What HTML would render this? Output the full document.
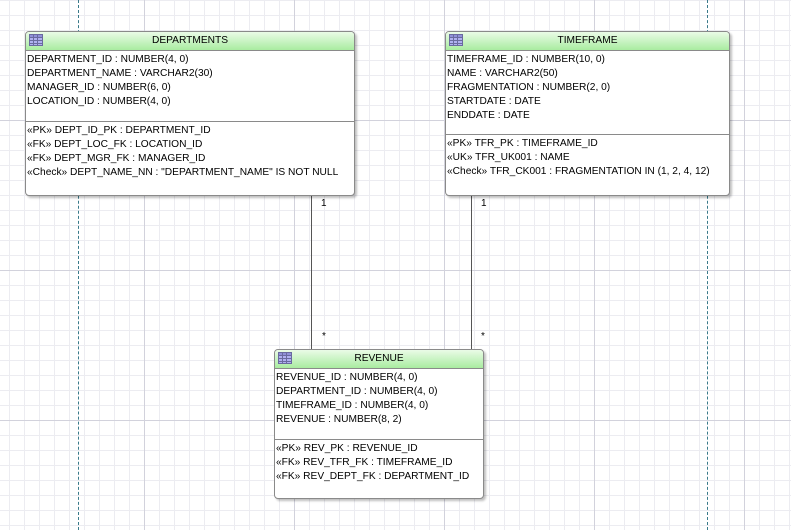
<!DOCTYPE html>
<html><head><style>
body{margin:0;width:791px;height:530px;overflow:hidden;position:relative;background:#fff;
background-image:
linear-gradient(to right,#d2d2dc 1px,transparent 1px),
linear-gradient(to bottom,#d2d2dc 1px,transparent 1px),
linear-gradient(to right,#ececf1 1px,transparent 1px),
linear-gradient(to bottom,#ececf1 1px,transparent 1px);
background-size:150px 150px,150px 150px,15px 15px,15px 15px;
background-position:144px 0,0 120px,9px 0,0 0;
font-family:"Liberation Sans",sans-serif;font-size:10.2px;color:#000}
.dash{position:absolute;top:0;width:0;height:530px;border-left:1px dashed #3a7a8a}
.t{position:absolute;background:#fff;border:1px solid #8a8a8a;border-radius:4px;box-shadow:2px 2px 2px rgba(0,0,0,.25);overflow:hidden}
.h{height:18px;border-bottom:1px solid #8a8a8a;background:linear-gradient(#eafbe7,#a9eca0);text-align:center;line-height:17px;position:relative}
.ic{position:absolute;left:3px;top:2px;width:14px;height:12px;border:1px solid #6a6aa0;box-sizing:border-box;
background:linear-gradient(to right,transparent 3px,#6a6aa0 3px,#6a6aa0 4px,transparent 4px,transparent 7px,#6a6aa0 7px,#6a6aa0 8px,transparent 8px),
linear-gradient(to bottom,#9090d8 2px,#6a6aa0 2px,#6a6aa0 3px,#b0b0f0 3px,#b0b0f0 5px,#6a6aa0 5px,#6a6aa0 6px,#b0b0f0 6px,#b0b0f0 8px,#6a6aa0 8px,#6a6aa0 9px,#b0b0f0 9px)}
.s{padding:2px 0 0 1px;line-height:14px;white-space:nowrap}
.sep{border-top:1px solid #8a8a8a}
.l{position:absolute;width:1px;background:#555}
.lb{position:absolute;font-size:10px}
</style></head><body>
<div class="dash" style="left:78px"></div>
<div class="dash" style="left:707px"></div>
<div class="l" style="left:311px;top:195px;height:154px"></div>
<div class="l" style="left:471px;top:195px;height:154px"></div>
<div class="lb" style="left:321px;top:198px">1</div>
<div class="lb" style="left:322px;top:331px">*</div>
<div class="lb" style="left:481px;top:198px">1</div>
<div class="lb" style="left:481px;top:331px">*</div>

<div class="t" style="left:25px;top:31px;width:328px;height:163px">
<div class="h"><span class="ic"></span>DEPARTMENTS</div>
<div class="s" style="height:68px">DEPARTMENT_ID : NUMBER(4, 0)<br>DEPARTMENT_NAME : VARCHAR2(30)<br>MANAGER_ID : NUMBER(6, 0)<br>LOCATION_ID : NUMBER(4, 0)</div>
<div class="sep s">«PK» DEPT_ID_PK : DEPARTMENT_ID<br>«FK» DEPT_LOC_FK : LOCATION_ID<br>«FK» DEPT_MGR_FK : MANAGER_ID<br>«Check» DEPT_NAME_NN : "DEPARTMENT_NAME" IS NOT NULL</div>
</div>

<div class="t" style="left:445px;top:31px;width:283px;height:163px">
<div class="h"><span class="ic"></span>TIMEFRAME</div>
<div class="s" style="height:81px">TIMEFRAME_ID : NUMBER(10, 0)<br>NAME : VARCHAR2(50)<br>FRAGMENTATION : NUMBER(2, 0)<br>STARTDATE : DATE<br>ENDDATE : DATE</div>
<div class="sep s">«PK» TFR_PK : TIMEFRAME_ID<br>«UK» TFR_UK001 : NAME<br>«Check» TFR_CK001 : FRAGMENTATION IN (1, 2, 4, 12)</div>
</div>

<div class="t" style="left:274px;top:349px;width:208px;height:148px">
<div class="h"><span class="ic"></span>REVENUE</div>
<div class="s" style="height:68px">REVENUE_ID : NUMBER(4, 0)<br>DEPARTMENT_ID : NUMBER(4, 0)<br>TIMEFRAME_ID : NUMBER(4, 0)<br>REVENUE : NUMBER(8, 2)</div>
<div class="sep s">«PK» REV_PK : REVENUE_ID<br>«FK» REV_TFR_FK : TIMEFRAME_ID<br>«FK» REV_DEPT_FK : DEPARTMENT_ID</div>
</div>
</body></html>
